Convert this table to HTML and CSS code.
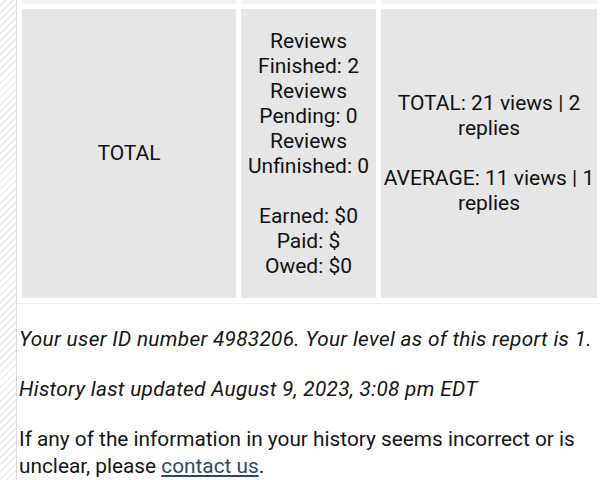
FILE: index.html
```html
<!DOCTYPE html>
<html lang="en">
<head>
<meta charset="utf-8">
<title>History report</title>
<link rel="stylesheet" href="styles.css">
</head>
<body>
<div class="page">
  <aside class="stripe"></aside>
  <main class="content">
    <div class="report">
      <div class="cell cell-prev"></div>
      <div class="cell cell-prev"></div>
      <div class="cell cell-prev"></div>
      <div class="cell">TOTAL</div>
      <div class="cell">Reviews Finished: 2<br>Reviews Pending: 0<br>Reviews Unfinished: 0<br><br>Earned: $0<br>Paid: $<br>Owed: $0</div>
      <div class="cell">TOTAL: 21 views | 2 replies<br><br>AVERAGE: 11 views | 1 replies</div>
    </div>
    <p class="note"><em class="emph">Your user ID number 4983206. Your level as of this report is 1.</em></p>
    <p class="note"><em class="emph">History last updated August 9, 2023, 3:08 pm EDT</em></p>
    <p class="note">If any of the information in your history seems incorrect or is unclear, please <a href="#" class="link">contact us</a>.</p>
  </main>
</div>
</body>
</html>
```

FILE: styles.css
```css
html, body {
  margin: 0;
  padding: 0;
  background: #ffffff;
}

body {
  font-family: Roboto, "Noto Sans", "Liberation Sans", sans-serif;
  font-size: 21px;
  color: #161616;
}

.page {
  display: flex;
  height: 480px;
  overflow: hidden;
}

.stripe {
  flex: none;
  width: 16px;
  border-right: 1px solid #dcdcdc;
  background: repeating-linear-gradient(135deg, #ffffff 0 3px, #eeeeee 3px 5px);
}

.content {
  flex: 1;
  min-width: 0;
}

.report {
  display: grid;
  grid-template-columns: 214px 135px 216px;
  grid-template-rows: 4px 289px;
  gap: 5px;
  padding: 0 0 5px 5px;
  border-bottom: 1px solid #f1f1f1;
}

.cell {
  display: flex;
  align-items: center;
  justify-content: center;
  text-align: center;
  background: #e6e6e6;
  line-height: 25px;
  padding: 0 2px;
  color: #111111;
}

.cell-prev {
  background: #f3f3f3;
}

.note {
  margin: 22px 0 0;
  padding-left: 2px;
  font-size: 20.8px;
  line-height: 27px;
}

.note + .note {
  margin-top: 23px;
}

.emph {
  letter-spacing: 0.3px;
}

.link {
  color: #2a4a68;
  text-decoration: underline;
}
```
